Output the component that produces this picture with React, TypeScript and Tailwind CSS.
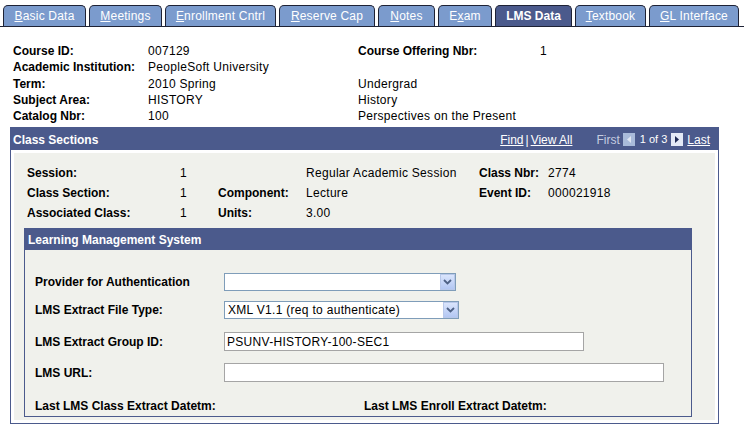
import React from "react";

const tabs: { label: string; u: number; w: number; active?: boolean }[] = [
  { label: "Basic Data", u: 0, w: 83 },
  { label: "Meetings", u: 0, w: 73 },
  { label: "Enrollment Cntrl", u: 0, w: 111 },
  { label: "Reserve Cap", u: 0, w: 96 },
  { label: "Notes", u: 0, w: 57 },
  { label: "Exam", u: 1, w: 54 },
  { label: "LMS Data", u: -1, w: 77, active: true },
  { label: "Textbook", u: 0, w: 71 },
  { label: "GL Interface", u: 0, w: 90 },
];

function Tab({ label, u, w, active }: { label: string; u: number; w: number; active?: boolean }) {
  return (
    <div
      style={{ width: w }}
      className={
        "h-[21px] rounded-t-[5px] border border-b-0 border-[#1e2235] flex items-center justify-center text-[12px] leading-none " +
        (active ? "bg-[#4b5a8c] text-white font-bold" : "bg-[#7b9bcd] text-white tracking-[0.2px]")
      }
    >
      {u < 0 ? (
        label
      ) : (
        <span>
          {label.slice(0, u)}
          <span className="underline">{label[u]}</span>
          {label.slice(u + 1)}
        </span>
      )}
    </div>
  );
}

function Chevron() {
  return (
    <div className="w-[15px] h-[16px] bg-gradient-to-b from-[#dae5fc] to-[#b3c7f3] border border-[#b8c8ea] flex items-center justify-center">
      <svg width="9" height="6" viewBox="0 0 9 6">
        <path d="M1 1 L4.5 4.5 L8 1" stroke="#4d6185" strokeWidth="1.8" fill="none" />
      </svg>
    </div>
  );
}

function Select({ w, text }: { w: number; text: string }) {
  return (
    <div style={{ width: w }} className="h-[18px] border border-[#7f9db9] bg-white flex items-center justify-between">
      <span className="pl-[3px] text-[12px] leading-none tracking-[0.3px]">{text}</span>
      <Chevron />
    </div>
  );
}

function Input({ w, text }: { w: number; text: string }) {
  return (
    <div style={{ width: w }} className="h-[19px] border border-[#a5a5a5] bg-white flex items-center">
      <span className="pl-[2px] text-[12px] leading-none tracking-[0.3px]">{text}</span>
    </div>
  );
}

function V({ children }: { children?: React.ReactNode }) {
  return <span className="tracking-[0.3px]">{children}</span>;
}

export default function App() {
  return (
    <div className="w-[744px] h-[432px] bg-white overflow-hidden text-black text-[12px] font-['Liberation_Sans',Arial,sans-serif]">
      {/* Tabs */}
      <div className="h-[27px] pt-[5px] pl-[3px] flex gap-[3px] border-b border-[#1e2235]">
        {tabs.map((t) => (
          <Tab key={t.label} {...t} />
        ))}
      </div>

      {/* Header fields */}
      <div className="pt-[16px] pl-[13px] grid grid-cols-[135px_210px_182px_auto] auto-rows-[16.25px] items-center leading-none">
        <span className="font-bold">Course ID:</span>
        <V>007129</V>
        <span className="font-bold">Course Offering Nbr:</span>
        <V>1</V>

        <span className="font-bold">Academic Institution:</span>
        <V>PeopleSoft University</V>
        <span></span>
        <span></span>

        <span className="font-bold">Term:</span>
        <V>2010 Spring</V>
        <V>Undergrad</V>
        <span></span>

        <span className="font-bold">Subject Area:</span>
        <V>HISTORY</V>
        <V>History</V>
        <span></span>

        <span className="font-bold">Catalog Nbr:</span>
        <V>100</V>
        <V>Perspectives on the Present</V>
        <span></span>
      </div>

      {/* Class Sections */}
      <div className="mt-[3px] ml-[10px] w-[709px] border border-[#4b5a8c] bg-white">
        <div className="h-[22px] bg-[#4b5a8c] flex items-center justify-between pl-[2px] pr-[8px] pt-[1px] text-white leading-none">
          <span className="font-bold">Class Sections</span>
          <div className="flex items-center whitespace-nowrap">
            <span className="underline">Find</span>
            <span className="ml-[2px]">|</span>
            <span className="ml-[2px] underline">View All</span>
            <span className="ml-[24px] text-[#c5cde0]">First</span>
            <svg className="ml-[3px]" width="12" height="13" viewBox="0 0 12 13">
              <rect x="0" y="0" width="12" height="13" fill="#a9bbda" />
              <path d="M8 3 L4 6.5 L8 10 Z" fill="#dfe6f2" />
            </svg>
            <span className="ml-[5px] text-[11px]">1 of 3</span>
            <svg className="ml-[4px]" width="12" height="13" viewBox="0 0 12 13">
              <rect x="0" y="0" width="12" height="13" fill="#e4eaf6" />
              <path d="M4 3 L8 6.5 L4 10 Z" fill="#1f2a55" />
            </svg>
            <span className="ml-[4px] underline">Last</span>
          </div>
        </div>
        <div className="p-[3px]">
          <div className="bg-[#f0f1ec] pt-[10px] pb-[3px]">
            <div className="pl-[13px] grid grid-cols-[153px_38px_88px_173px_69px_auto] auto-rows-[20px] items-center leading-none">
              <span className="font-bold">Session:</span>
              <V>1</V>
              <span></span>
              <V>Regular Academic Session</V>
              <span className="font-bold">Class Nbr:</span>
              <V>2774</V>

              <span className="font-bold">Class Section:</span>
              <V>1</V>
              <span className="font-bold">Component:</span>
              <V>Lecture</V>
              <span className="font-bold">Event ID:</span>
              <V>000021918</V>

              <span className="font-bold">Associated Class:</span>
              <V>1</V>
              <span className="font-bold">Units:</span>
              <V>3.00</V>
              <span></span>
              <span></span>
            </div>

            {/* LMS */}
            <div className="mt-[5px] ml-[10px] w-[668px] border border-[#4b5a8c]">
              <div className="h-[21px] bg-[#4b5a8c] flex items-center pl-[3px] pt-[1px] text-white font-bold leading-none">
                Learning Management System
              </div>
              <div className="pt-[22px] pb-[3px] pl-[10px] flex flex-col leading-none">
                <div className="h-[19px] flex items-center">
                  <span className="w-[189px] font-bold">Provider for Authentication</span>
                  <Select w={232} text="" />
                </div>
                <div className="mt-[9px] h-[19px] flex items-center">
                  <span className="w-[189px] font-bold">LMS Extract File Type:</span>
                  <Select w={235} text="XML V1.1 (req to authenticate)" />
                </div>
                <div className="mt-[13px] h-[19px] flex items-center">
                  <span className="w-[189px] font-bold">LMS Extract Group ID:</span>
                  <Input w={360} text="PSUNV-HISTORY-100-SEC1" />
                </div>
                <div className="mt-[12px] h-[19px] flex items-center">
                  <span className="w-[189px] font-bold">LMS URL:</span>
                  <Input w={440} text="" />
                </div>
                <div className="mt-[17px] h-[14px] flex items-center font-bold">
                  <span className="w-[329px]">Last LMS Class Extract Datetm:</span>
                  <span>Last LMS Enroll Extract Datetm:</span>
                </div>
              </div>
            </div>
          </div>
        </div>
      </div>
    </div>
  );
}
